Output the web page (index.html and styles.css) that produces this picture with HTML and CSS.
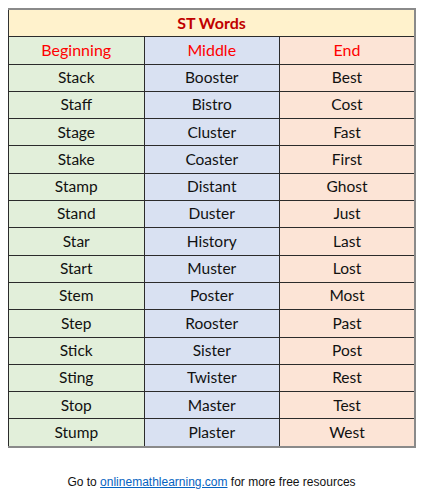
FILE: index.html
```html
<!DOCTYPE html>
<html>
<head>
<meta charset="utf-8">
<link rel="stylesheet" href="styles.css">
</head>
<body>
<div class="page">
<table class="words">
  <tr class="title"><td colspan="3">ST Words</td></tr>
  <tr class="head"><td class="c1">Beginning</td><td class="c2">Middle</td><td class="c3">End</td></tr>
  <tr><td class="c1">Stack</td><td class="c2">Booster</td><td class="c3">Best</td></tr>
  <tr><td class="c1">Staff</td><td class="c2">Bistro</td><td class="c3">Cost</td></tr>
  <tr><td class="c1">Stage</td><td class="c2">Cluster</td><td class="c3">Fast</td></tr>
  <tr><td class="c1">Stake</td><td class="c2">Coaster</td><td class="c3">First</td></tr>
  <tr><td class="c1">Stamp</td><td class="c2">Distant</td><td class="c3">Ghost</td></tr>
  <tr><td class="c1">Stand</td><td class="c2">Duster</td><td class="c3">Just</td></tr>
  <tr><td class="c1">Star</td><td class="c2">History</td><td class="c3">Last</td></tr>
  <tr><td class="c1">Start</td><td class="c2">Muster</td><td class="c3">Lost</td></tr>
  <tr><td class="c1">Stem</td><td class="c2">Poster</td><td class="c3">Most</td></tr>
  <tr><td class="c1">Step</td><td class="c2">Rooster</td><td class="c3">Past</td></tr>
  <tr><td class="c1">Stick</td><td class="c2">Sister</td><td class="c3">Post</td></tr>
  <tr><td class="c1">Sting</td><td class="c2">Twister</td><td class="c3">Rest</td></tr>
  <tr><td class="c1">Stop</td><td class="c2">Master</td><td class="c3">Test</td></tr>
  <tr><td class="c1">Stump</td><td class="c2">Plaster</td><td class="c3">West</td></tr>
</table>
<p class="footer">Go to <a href="#">onlinemathlearning.com</a> for more free resources</p>
</div>
</body>
</html>
```
FILE: styles.css
```css
html, body {
  margin: 0;
  padding: 0;
  background: #ffffff;
}
.page {
  padding: 8px 0 0 8px;
}
.words {
  border-collapse: collapse;
  width: 408px;
  table-layout: fixed;
  font-family: Lato, "Open Sans", sans-serif;
  font-size: 15.5px;
  color: #111;
  border-top: 2px solid #8a8a8a;
  border-right: 2px solid #8a8a8a;
  border-bottom: 2px solid #8a8a8a;
  border-left: 1px solid #333;
}
.words td {
  border: 1px solid #2b2b2b;
  height: 26.3px;
  padding: 0;
  text-align: center;
  vertical-align: middle;
  line-height: 1;
}
.words .title td {
  background: #fff2cc;
  color: #c00000;
  font-weight: bold;
  font-size: 16px;
  border-top: 2px solid #8a8a8a;
  border-left: 1px solid #333;
  border-right: 2px solid #8a8a8a;
}
.words .head td {
  color: #ff0000;
  font-size: 16px;
}
.c1 { background: #e2efda; }
.c2 { background: #d9e1f2; }
.c3 { background: #fce4d6; }
.words tr:last-child td {
  border-bottom: 2px solid #8a8a8a;
}
.words td.c3 {
  border-right: 2px solid #8a8a8a;
}
.footer {
  margin: 27px 0 0 -8px;
  text-align: center;
  font-family: "Liberation Sans", Arial, sans-serif;
  font-size: 12px;
  color: #111;
}
.footer a {
  color: #0563c1;
  text-decoration: underline;
}
```
